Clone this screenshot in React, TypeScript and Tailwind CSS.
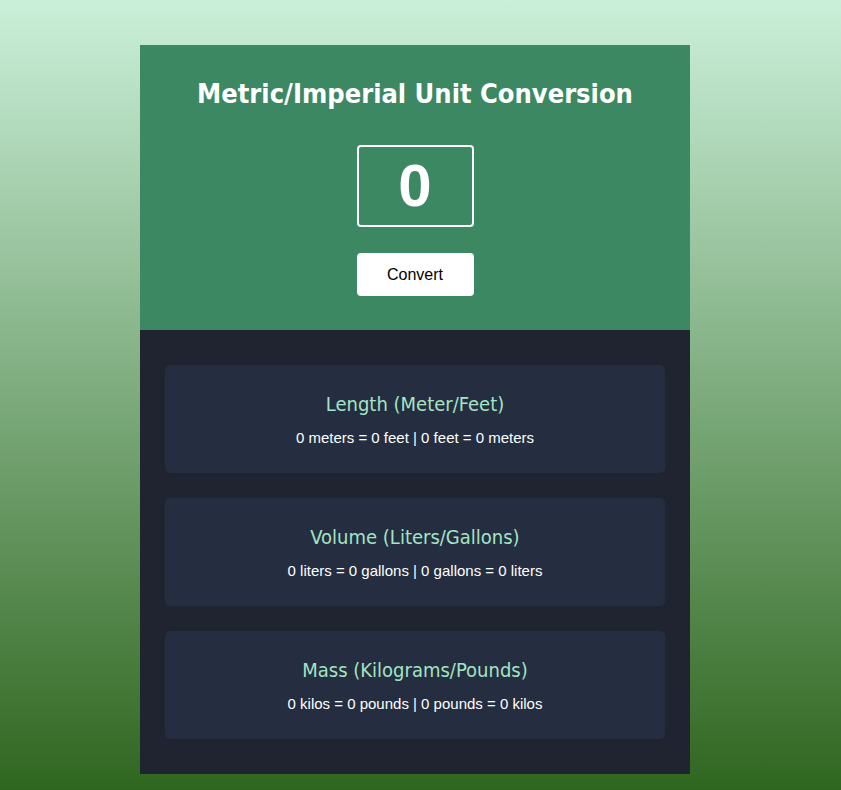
import { useState } from "react";

type Row = { title: string; text: string };

const rows: Row[] = [
  { title: "Length (Meter/Feet)", text: "0 meters = 0 feet | 0 feet = 0 meters" },
  { title: "Volume (Liters/Gallons)", text: "0 liters = 0 gallons | 0 gallons = 0 liters" },
  { title: "Mass (Kilograms/Pounds)", text: "0 kilos = 0 pounds | 0 pounds = 0 kilos" },
];

function ResultCard({ row }: { row: Row }) {
  return (
    <div className="flex h-[108px] flex-col items-center rounded-[5px] bg-[#252e40] pt-[25px]">
      <h2 className="text-[20px] leading-[28px] text-[#a3e4c4] [font-family:'DejaVu_Sans_Condensed','DejaVu_Sans',sans-serif]">
        {row.title}
      </h2>
      <p className="mt-[9px] text-[15px] leading-[22px] text-white [font-family:'Liberation_Sans',Arial,sans-serif]">
        {row.text}
      </p>
    </div>
  );
}

export default function App() {
  const [value, setValue] = useState("0");
  return (
    <div className="min-h-screen bg-[linear-gradient(to_bottom,#cbf0da,#2f661f)] pt-[45px] pb-[16px]">
      <div className="ml-[140px] w-[550px]">
        {/* input header */}
        <div className="flex h-[285px] flex-col items-center bg-[#3b8862] pt-[32px]">
          <h1 className="text-[27px] font-bold leading-[34px] text-white [font-family:'DejaVu_Sans_Condensed','DejaVu_Sans',sans-serif]">
            Metric/Imperial Unit Conversion
          </h1>
          <input
            value={value}
            onChange={(e) => setValue(e.target.value)}
            className="mt-[34px] h-[82px] w-[117px] rounded-[4px] border-2 border-white bg-transparent text-center text-[60px] font-bold text-white outline-none [font-family:'Liberation_Sans',Arial,sans-serif]"
          />
          <button className="mt-[26px] h-[43px] w-[117px] rounded-[4px] bg-white text-[16px] text-black [font-family:'Liberation_Sans',Arial,sans-serif]">
            Convert
          </button>
        </div>
        {/* results */}
        <div className="flex flex-col gap-[25px] bg-[#1f2430] px-[25px] pt-[35px] pb-[35px]">
          {rows.map((r) => (
            <ResultCard key={r.title} row={r} />
          ))}
        </div>
      </div>
    </div>
  );
}
